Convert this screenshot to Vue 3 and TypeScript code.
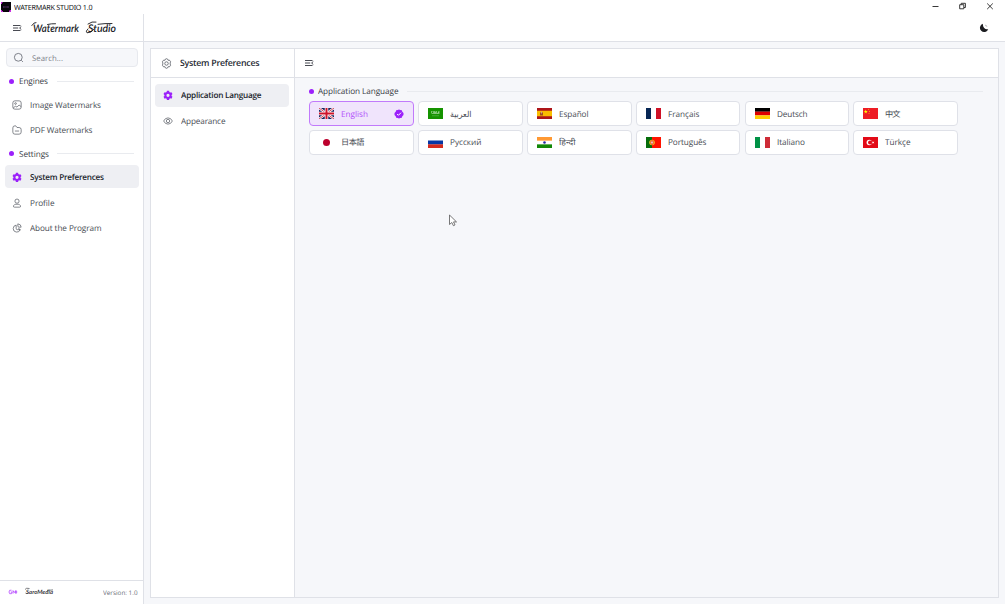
<script setup lang="ts">
import { ref } from 'vue'

interface Item { name: string; icon: string }
interface Language { code: string; name: string; w: number }

const engines: Item[] = [
  { name: 'Image Watermarks', icon: 'image' },
  { name: 'PDF Watermarks', icon: 'folder' },
]
const settings: Item[] = [
  { name: 'System Preferences', icon: 'gear' },
  { name: 'Profile', icon: 'user' },
  { name: 'About the Program', icon: 'pie' },
]
const widths: Record<string, number> = {
  'Image Watermarks': 71, 'PDF Watermarks': 62.5, 'System Preferences': 74,
  Profile: 24.5, 'About the Program': 71.5,
}
const languages: Language[] = [
  { code: 'gb', name: 'English', w: 27 },
  { code: 'sa', name: 'العربية', w: 21.5 },
  { code: 'es', name: 'Español', w: 29.5 },
  { code: 'fr', name: 'Français', w: 31.5 },
  { code: 'de', name: 'Deutsch', w: 30.5 },
  { code: 'cn', name: '中文', w: 15.5 },
  { code: 'jp', name: '日本語', w: 23.5 },
  { code: 'ru', name: 'Русский', w: 31.5 },
  { code: 'in', name: 'हिन्दी', w: 16.5 },
  { code: 'pt', name: 'Português', w: 38.5 },
  { code: 'it', name: 'Italiano', w: 28 },
  { code: 'tr', name: 'Türkçe', w: 25.5 },
]
const selected = ref('gb')
const gear = 'M9.4 2h5.2l.7 3 1.9 1.1 3-.9 2.6 4.5-2.2 2.1v2.3l2.2 2.1-2.6 4.5-3-.9-1.9 1.1-.7 3H9.4l-.7-3-1.9-1.1-3 .9-2.6-4.5 2.2-2.1v-2.3L1.2 9.7l2.6-4.5 3 .9L8.7 5zM12 8.9a3.8 3.8 0 1 0 0 7.6 3.8 3.8 0 0 0 0-7.6z'
</script>

<template>
  <div class="window">
    <div class="titlebar">
      <svg class="app-logo" viewBox="0 0 10 10"><rect width="10" height="10" fill="#08050b" /><path d="M0 0h1.5v1H1v1H0zM8.500 9V8H10v2H8V9zM0 8h1v1h1v1H0z" fill="#c82bdc" /><path d="M2 5h6" stroke="#6d3c82" stroke-width="1" stroke-dasharray="1 .3" /></svg>
      <svg class="app-name" viewBox="0 0 82 12"><text x="0" y="9" textLength="78.500">WATERMARK STUDIO 1.0</text></svg>
      <svg class="controls" viewBox="0 0 75 14" fill="none" stroke="#222" stroke-width=".9"><path d="M2.500 6.500h6M29.700 4.700h4.100v4.100h-4.100zM31.200 4.500V3.300h4.200v4.200H34M57.200 3.500l5.600 5.600m0-5.600-5.600 5.600" /></svg>
    </div>
    <div class="shell">
      <aside class="side">
        <div class="brand">
          <svg class="menu" viewBox="0 0 10 8"><path d="M1 1.500h7.500M1 4h5.200M1 6.500h7.500M9.300 2.500 7.600 4l1.700 1.500" /></svg>
          <svg class="wordmark" viewBox="0 0 90 20"><text x="2" y="13.500" textLength="46" lengthAdjust="spacingAndGlyphs">Watermark</text><text x="57" y="13.500" textLength="28" lengthAdjust="spacingAndGlyphs">Studio</text><path d="M.800 7.500Q3 4 5 4.500M16.500 6.500q4-1 8-.8M65 4q-4-1-8 2M63 11q-3 4.500-7 3.800-2-1.200 1-4M67 6.300q7-1 14-.8" /></svg>
        </div>
        <div class="side-body">
          <div class="search">
            <svg class="lens" viewBox="0 0 12 12"><circle cx="5.300" cy="5.300" r="3.900" /><path d="m8.300 8.300 1.600 1.600" /></svg>
            <svg class="placeholder" viewBox="0 0 34 12"><text x="0" y="9" textLength="31">Search...</text></svg>
          </div>
          <template v-for="(group, gi) in [engines, settings]" :key="gi">
            <div class="label"><i></i><svg class="group-name" viewBox="0 0 31 12"><text x="0" y="9.200" :textLength="gi ? 30 : 29">{{ gi ? 'Settings' : 'Engines' }}</text></svg><b></b></div>
            <nav>
              <a v-for="item in group" :key="item.name" class="item" :class="{ active: item.icon === 'gear' }">
                <svg class="icon" viewBox="0 0 24 24">
                  <path v-if="item.icon === 'gear'" class="solid" fill-rule="evenodd" :d="gear" />
                  <g v-else-if="item.icon === 'image'"><rect x="2" y="2" width="20" height="20" rx="5" /><circle cx="8.500" cy="8.500" r="2" /><path d="m3 19 5-4 4 2 5-5 5 4" /></g>
                  <g v-else-if="item.icon === 'folder'"><path d="M2 7q0-5 5-5h2l3 4h5q5 0 5 5v6q0 5-5 5H7q-5 0-5-5zM7 14.500h10" /></g>
                  <g v-else-if="item.icon === 'user'"><circle cx="12" cy="7.500" r="5" /><path d="M6 22q-4 0-2-4 2-3 5-3h6q3 0 5 3 2 4-2 4z" /></g>
                  <g v-else><path d="M10 5a8.500 8.500 0 1 0 9.500 11H13q-3 0-3-3zM14 2v5q0 3 3 3h5q0-7-8-8zM15 12.500q5 2 5 5" /></g>
                </svg>
                <svg class="caption" viewBox="0 0 90 14"><text x="0" y="10.200" :textLength="widths[item.name]">{{ item.name }}</text></svg>
              </a>
            </nav>
          </template>
        </div>
        <footer>
          <svg class="mark" viewBox="0 0 10 6"><path d="M3.500 1.200Q1 .5 1 3t2.500 1.700L4 3H2.700M5 4.600V1.600l1.300 2 1.400-2v3M8.200 1.600v3M7 3h2.300" /></svg>
          <svg class="signature" viewBox="0 0 34 12"><text x="2" y="7.500" textLength="27" lengthAdjust="spacingAndGlyphs">SaroMedia</text><path d="M5.500 2.500Q2 1.500 1 3.500M1.500 7q1 1 3 0M23 4.500l6-.6" /></svg>
          <svg class="version" viewBox="0 0 35 10"><text x="0" y="7.600" textLength="34.500">Version: 1.0</text></svg>
        </footer>
      </aside>
      <div class="main">
        <header class="top">
          <svg viewBox="0 0 10 10"><path d="M4 .8A4.200 4.200 0 1 0 9.200 6C7 7.200 3.200 4.800 4 .8z" /><path d="M6 1.500q2 .5 2.500 2.500L6.500 3z" opacity=".35" /></svg>
        </header>
        <div class="workspace">
          <section class="panel">
            <div class="sub">
              <div class="sub-head">
                <svg class="icon" viewBox="0 0 24 24"><path d="m9.500 2.500 2.500-1 2.500 1 1 2.500 3-.2 2.500 3.500-1 2.500v2.400l1 2.500-2.500 3.500-3-.2-1 2.500-2.500 1-2.500-1-1-2.500-3 .2L3 15.700l1-2.500v-2.400L3 8.300l2.500-3.500 3 .2z" /><circle cx="12" cy="12" r="3.800" /></svg>
                <svg class="caption strong" viewBox="0 0 90 14"><text x="0" y="10.300" textLength="79.500">System Preferences</text></svg>
              </div>
              <nav class="sub-nav">
                <a class="item active"><svg class="icon" viewBox="0 0 24 24"><path class="solid" fill-rule="evenodd" :d="gear" /></svg><svg class="caption" viewBox="0 0 90 14"><text x="0" y="9.900" textLength="80.500">Application Language</text></svg></a>
                <a class="item"><svg class="icon" viewBox="0 0 24 24"><path d="M1.500 12Q5 4.500 12 4.500T22.500 12Q19 19.500 12 19.500T1.500 12z" /><circle cx="12" cy="12" r="4" /></svg><svg class="caption" viewBox="0 0 90 14"><text x="0" y="9.900" textLength="44.500">Appearance</text></svg></a>
              </nav>
            </div>
            <div class="detail">
              <div class="detail-head"><svg class="menu" viewBox="0 0 10 8"><path d="M1 1.500h7.500M1 4h5.200M1 6.500h7.500M9.300 2.500 7.600 4l1.700 1.500" /></svg></div>
              <div class="content">
                <div class="label"><i></i><svg class="heading" viewBox="0 0 82 12"><text x="0" y="9" textLength="80.500">Application Language</text></svg><b></b></div>
                <div class="languages">
                  <button v-for="l in languages" :key="l.code" :class="{ selected: selected === l.code }" @click="selected = l.code">
                    <svg class="flag" viewBox="0 0 30 22" preserveAspectRatio="none">
                      <g v-if="l.code === 'gb'"><path fill="#17245f" d="M0 0h30v22H0z" /><path d="m0 0 30 22M30 0 0 22" stroke="#fff" stroke-width="4.500" /><path d="m0 0 30 22M30 0 0 22" stroke="#c8213a" stroke-width="1.700" /><path d="M15 0v22M0 11h30" stroke="#fff" stroke-width="7" /><path d="M15 0v22M0 11h30" stroke="#cf142b" stroke-width="4" /></g>
                      <g v-else-if="l.code === 'sa'"><path fill="#159300" d="M0 0h30v22H0z" /><path d="M7 6v4M9 7h2v3m2-4v4h2V7m2 3V6m2 4h2V7m1-1v4M7 11h16" stroke="#d8f1d4" fill="none" /><path d="M8 15.500h14" stroke="#70bf66" /></g>
                      <g v-else-if="l.code === 'es'"><path fill="#ad1519" d="M0 0h30v22H0z" /><path fill="#fabd00" d="M0 5.500h30v11H0z" /><path fill="#a34d1d" d="M6 9h6v6H6z" /><path d="M9 7v4" stroke="#d0a493" stroke-width="2" /></g>
                      <g v-else-if="l.code === 'fr'"><path fill="#fff" d="M0 0h30v22H0z" /><path fill="#062654" d="M0 0h10v22H0z" /><path fill="#ce1126" d="M20 0h10v22H20z" /></g>
                      <g v-else-if="l.code === 'de'"><path d="M0 0h30v7.500H0z" /><path fill="#d00" d="M0 7.300h30v7.500H0z" /><path fill="#ffce00" d="M0 14.700h30V22H0z" /></g>
                      <g v-else-if="l.code === 'cn'"><path fill="#ee1c25" d="M0 0h30v22H0z" /><path fill="#ff0" d="m5.500 3 1 3h3L7 8l1 3-2.500-2L3 11l1-3-2.500-2h3z" /><path d="M11 2v2m2 2v2m-1 2v2" stroke="#f8b000" stroke-width="1.500" /></g>
                      <g v-else-if="l.code === 'jp'"><path fill="#fff" d="M0 0h30v22H0z" /><circle cx="15" cy="11" r="7" fill="#bc002d" /></g>
                      <g v-else-if="l.code === 'ru'"><path fill="#fff" d="M0 0h30v22H0z" /><path fill="#0637a5" d="M0 7h30v8H0z" /><path fill="#d52b1e" d="M0 14.700h30V22H0z" /></g>
                      <g v-else-if="l.code === 'in'"><path fill="#fff" d="M0 0h30v22H0z" /><path fill="#ff9933" d="M0 0h30v7.300H0z" /><path fill="#128807" d="M0 14.700h30V22H0z" /><circle cx="15" cy="11" r="2.600" fill="#2429a0" /></g>
                      <g v-else-if="l.code === 'pt'"><path fill="#ff1300" d="M0 0h30v22H0z" /><path fill="#066d0a" d="M0 0h12v22H0z" /><circle cx="12" cy="11" r="5.500" fill="#f4cc28" /><path fill="#e93224" d="M9 7h6v7q-3 3-6 0z" /><path fill="#eee" d="M10.500 9h3v4h-3z" /></g>
                      <g v-else-if="l.code === 'it'"><path fill="#fff" d="M0 0h30v22H0z" /><path fill="#009246" d="M0 0h10v22H0z" /><path fill="#ce2b37" d="M20 0h10v22H20z" /></g>
                      <g v-else><path fill="#e30a17" d="M0 0h30v22H0z" /><circle cx="12.500" cy="11" r="5.300" fill="#fff" /><circle cx="14.300" cy="11" r="4.200" fill="#e30a17" /><path fill="#fff" d="m17 11 2-.7.2-2 1.300 1.500 2-.6-1 1.800 1 1.800-2-.6-1.300 1.500-.2-2z" /></g>
                    </svg>
                    <svg class="language-name" viewBox="0 0 46 14"><text x="0" y="10" :textLength="l.w" :lengthAdjust="['sa', 'in'].includes(l.code) ? 'spacingAndGlyphs' : 'spacing'">{{ l.name }}</text></svg>
                    <svg v-if="selected === l.code" class="check" viewBox="0 0 10 10"><path fill="#9b20fa" d="m5 .5 1.300.6 1.500.2.500 1.400L9.500 4v2l-1.200 1.300-.5 1.400-1.500.2-1.300.6-1.300-.6-1.500-.2-.5-1.400L.5 6V4l1.200-1.300.5-1.400 1.500-.2z" /><path d="m3.100 5 1.300 1.300L7 3.700" fill="none" stroke="#fff" stroke-width="1" /></svg>
                  </button>
                </div>
              </div>
            </div>
          </section>
        </div>
      </div>
    </div>
    <svg class="cursor" viewBox="0 0 9 13"><path d="M1.500 1v9.500l2.300-2 1.600 3.200 1.600-.8-1.500-3h3z" fill="#fff" stroke="#555" stroke-width=".8" /></svg>
  </div>
</template>

<style scoped>
* { box-sizing: border-box; }
.window { width: 1005px; height: 604px; background: #fff; color: #444952; font: 8.200px/14px "Open Sans", "Noto Sans", "Noto Sans CJK SC", sans-serif; position: relative; overflow: hidden; }
svg { flex: none; display: block; }
text { text-rendering: geometricPrecision; }
.titlebar { height: 14px; display: flex; align-items: flex-start; background: #fff; }
.app-logo { width: 10px; height: 10px; margin: 2px 0 0 1px; }
.app-name { width: 82px; height: 12px; margin: 1px 0 0 3px; font-size: 7.200px; fill: #17171b; font-family: "Noto Sans", sans-serif; }
.controls { width: 75px; height: 14px; margin-left: auto; }
.shell { height: 590px; display: flex; }
.side { width: 144px; border-right: 1px solid #dfe1e7; display: flex; flex-direction: column; }
.brand, .top { height: 28px; border-bottom: 1px solid #dfe1e7; display: flex; align-items: center; background: #fff; flex: none; }
.brand { padding-left: 12px; }
.menu { width: 10px; height: 8px; fill: none; stroke: #34373f; stroke-width: .9; }
.wordmark { width: 90px; height: 20px; margin-left: 9px; font: italic 600 10.500px Lato, sans-serif; fill: #191a1f; }
.wordmark path { fill: none; stroke: #191a1f; stroke-width: .9; stroke-linecap: round; }
.side-body { padding: 6px 4.500px 0; flex: 1; }
.search { height: 19px; margin: 0 0 0 1px; width: 132.500px; border: 1px solid #e7e9ee; border-radius: 4px; background: #f6f7fa; display: flex; align-items: center; }
.lens { width: 12px; height: 12px; margin: 0 7.500px 0 6px; fill: none; stroke: #70747e; stroke-width: .9; }
.placeholder { width: 34px; height: 12px; fill: #7e828a; font-size: 7.800px; }
.label { display: flex; align-items: center; height: 12px; color: #373b45; }
.label i { width: 5px; height: 5px; border-radius: 50%; background: #9c20fb; margin-right: 4.500px; }
.label b { flex: 1; height: 1px; background: #e9ebef; margin-left: 7px; }
.group-name { width: 31px; height: 12px; fill: #373b45; }
.side-body .label { margin: 8.300px 4.500px 5.800px; }
.side-body .label i { margin-left: 0; }
nav { display: flex; flex-direction: column; gap: 2.700px; }
.side nav { margin-bottom: -2.500px; }
.item { height: 23px; display: flex; align-items: center; padding-left: 7.500px; border-radius: 4px; width: 134px; }
.icon { width: 10px; height: 10px; fill: none; stroke: #555962; stroke-width: 1.700; }
.item .icon { margin-right: 8px; }
.solid { fill: #9b20fa; stroke: none; }
.caption { width: 90px; height: 14px; fill: #484c54; }
.active { background: #eeeff3; }
.active .caption { fill: #20242b; font-weight: 550; }
.strong { font-size: 8.800px; font-weight: 550; fill: #252932; }
footer { height: 24.500px; border-top: 1px solid #dfe1e7; display: flex; align-items: center; padding: 0 5px 1px 8px; }
.mark { width: 10px; height: 6px; fill: none; stroke: #b649ff; stroke-width: .8; }
.signature { width: 34px; height: 12px; margin-left: 6px; font: italic 600 6px Lato, sans-serif; fill: #25272e; }
.signature path { fill: none; stroke: #25272e; stroke-width: .6; }
.version { width: 35px; height: 10px; margin-left: auto; font-size: 6.300px; fill: #666b74; }
.main { flex: 1; display: flex; flex-direction: column; background: #f6f7fa; }
.top { justify-content: flex-end; padding-right: 16px; }
.top svg { width: 10px; height: 10px; fill: #1c1d21; }
.workspace { flex: 1; padding: 6px; }
.panel { height: 550px; border: 1px solid #dfe1e7; display: flex; }
.sub { width: 144px; border-right: 1px solid #dfe1e7; background: #fff; }
.sub-head, .detail-head { height: 29px; background: #fff; border-bottom: 1px solid #dfe1e7; display: flex; align-items: center; }
.sub-head { padding-left: 10px; }
.sub-head .icon { width: 11px; height: 11px; margin-right: 7.500px; }
.sub-nav { padding: 5.500px 4px; }
.sub-nav .item { padding-left: 8px; }
.detail { flex: 1; min-width: 0; }
.detail-head { padding-left: 9px; }
.content { padding: 7px 15px 0 14px; }
.content .label { margin: 0 0 4.300px; }
.content .label i { margin-right: 4px; }
.heading { width: 82px; height: 12px; fill: #373b45; }
.languages { display: grid; grid-template-columns: repeat(6, 104.800px); column-gap: 4.100px; row-gap: 3.600px; }
button { height: 25px; border: 1px solid #dfe1e8; border-radius: 4px; background: #fff; display: flex; align-items: center; padding: 0 9px; margin: 0; font: inherit; }
button.selected { background: #f0e4fc; border-color: #c17afb; }
.flag { width: 15px; height: 11px; margin-right: 7px; }
.language-name { width: 46px; height: 14px; fill: #484c54; }
.selected .language-name { fill: #b04efb; }
.check { width: 10px; height: 10px; margin-left: auto; margin-right: -.5px; }
.cursor { position: absolute; left: 448px; top: 214px; width: 9px; height: 13px; }
</style>

<style>
body { margin: 0; }
</style>
